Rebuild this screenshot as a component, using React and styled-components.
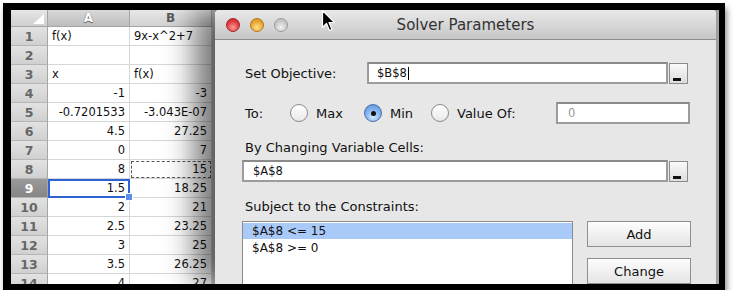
import React from "react";
import styled, { createGlobalStyle } from "styled-components";

const Global = createGlobalStyle`
  html, body {
    margin: 0;
    padding: 0;
    background: #fff;
    font-family: "DejaVu Sans", "Noto Sans", sans-serif;
  }
`;

const Frame = styled.div`
  margin: 3px 0 0 3px;
  width: 722px;
  height: 287px;
  box-sizing: border-box;
  background: #000;
  padding: 7px 6px 6px 8px;
  box-shadow: 2px 5px 6px rgba(0, 0, 0, 0.45);
`;

const Screen = styled.div`
  position: relative;
  width: 100%;
  height: 100%;
  overflow: hidden;
  display: flex;
  background: #a8a8a8;
`;

/* ---------- spreadsheet ---------- */

const Sheet = styled.div`
  width: 204px;
  flex: none;
  display: grid;
  grid-template-columns: 37px 82px 82px 3px;
  grid-auto-rows: 19px;
  grid-template-rows: 17px;
  background: #fff;
  font-size: 11.5px;
  color: #111;
`;

const Corner = styled.div`
  background: linear-gradient(#e6e6e6, #cfcfcf);
  border-right: 1px solid #a5a5a5;
  border-bottom: 1px solid #a5a5a5;
  position: relative;

  &::after {
    content: "";
    position: absolute;
    right: 3px;
    bottom: 2px;
    border-left: 11px solid transparent;
    border-bottom: 10px solid #fff;
  }
`;

const ColHead = styled.div`
  background: ${(p) => (p.$active ? "linear-gradient(#d8d8d8, #bdbdbd)" : "linear-gradient(#e8e8e8, #d2d2d2)")};
  border-right: 1px solid #a5a5a5;
  border-bottom: 1px solid #a5a5a5;
  display: flex;
  align-items: center;
  justify-content: center;
  font-weight: bold;
  font-size: 12px;
  color: ${(p) => (p.$active ? "#fff" : "#5a5a5a")};
  text-shadow: ${(p) => (p.$active ? "0 0 1px #555, 0 1px 1px #666" : "none")};
`;

const RowHead = styled.div`
  background: ${(p) => (p.$active ? "linear-gradient(#9a9a9a, #858585)" : "linear-gradient(#e2e2e2, #d0d0d0)")};
  border-right: 1px solid #a5a5a5;
  border-bottom: 1px solid #b5b5b5;
  display: flex;
  align-items: center;
  justify-content: center;
  font-weight: bold;
  font-size: 12.5px;
  color: ${(p) => (p.$active ? "#fff" : "#666")};
`;

const Cell = styled.div`
  position: relative;
  border-right: 1px solid #d6d6d6;
  border-bottom: 1px solid #d6d6d6;
  display: flex;
  align-items: center;
  justify-content: ${(p) => (p.$left ? "flex-start" : "flex-end")};
  padding: 0 4px;
  white-space: nowrap;
  overflow: visible;
  box-sizing: border-box;
  ${(p) => (p.$selected ? "outline: 2px solid #2d62d2; outline-offset: -2px; z-index: 1;" : "")}
  ${(p) => (p.$copy ? "outline: 1px dashed #555; outline-offset: -2px;" : "")}
`;

const Handle = styled.span`
  position: absolute;
  right: -4px;
  bottom: -4px;
  width: 6px;
  height: 6px;
  background: #5b8ee8;
  border: 1px solid #fff;
`;

const Gutter = styled.div`
  background: #c8c8c8;
`;

/* ---------- dialog ---------- */

const Dialog = styled.div`
  flex: none;
  width: 502px;
  height: 100%;
  display: flex;
  flex-direction: column;
  background: #e7e7e7;
  border-radius: 4px 4px 0 0;
  box-shadow: -20px 0 30px rgba(0, 0, 0, 0.55);
  border-right: 1px solid #9c9c9c;
  box-sizing: border-box;
  position: relative;
  z-index: 2;
`;

const TitleBar = styled.div`
  position: relative;
  height: 29px;
  flex: none;
  display: flex;
  align-items: center;
  justify-content: center;
  background: linear-gradient(#e9e9e9, #c6c6c6);
  border-bottom: 1px solid #8e8e8e;
  border-radius: 4px 4px 0 0;
  font-size: 15px;
  color: #333;
`;

const Lights = styled.div`
  position: absolute;
  left: 11px;
  top: 8px;
  display: flex;
  gap: 10px;
`;

const Light = styled.span`
  width: 14px;
  height: 14px;
  border-radius: 50%;
  box-sizing: border-box;
  border: 1px solid ${(p) => p.$edge};
  background: radial-gradient(circle at 50% 70%, ${(p) => p.$hi} 0%, ${(p) => p.$base} 65%);
`;

const Cursor = styled.svg`
  position: absolute;
  left: 106px;
  top: -1px;
`;

const Body = styled.div`
  padding: 22px 26px 0 27px;
  display: flex;
  flex-direction: column;
  font-size: 13px;
  color: #111;
`;

const Row = styled.div`
  display: flex;
  align-items: center;
  margin-top: ${(p) => p.$mt || 0}px;
`;

const Label = styled.div`
  padding-left: 3px;
  width: ${(p) => p.$w || "auto"};
  box-sizing: border-box;
  flex: none;
`;

const Input = styled.div`
  box-sizing: border-box;
  height: 22px;
  width: ${(p) => p.$w || "auto"};
  flex: ${(p) => (p.$grow ? 1 : "none")};
  background: #fff;
  border: 2px solid #9c9c9c;
  border-top-color: #8a8a8a;
  display: flex;
  align-items: center;
  padding-left: ${(p) => p.$pl || 8}px;
  font-size: 11.5px;
  color: ${(p) => (p.$muted ? "#999" : "#111")};
`;

const Caret = styled.span`
  display: inline-block;
  width: 1px;
  height: 13px;
  background: #000;
  margin-left: 1px;
`;

const RefButton = styled.div`
  flex: none;
  width: 19px;
  height: 21px;
  margin-left: 1px;
  margin-right: 2px;
  box-sizing: border-box;
  border: 1px solid #8c8c8c;
  background: linear-gradient(#fafafa, #dcdcdc);
  position: relative;

  &::after {
    content: "";
    position: absolute;
    left: 3px;
    bottom: 2px;
    width: 8px;
    height: 3px;
    background: #111;
  }
`;

const Option = styled.label`
  display: flex;
  align-items: center;
  gap: 8px;
  width: ${(p) => p.$w || "auto"};
  flex: none;
`;

const Radio = styled.span`
  width: 18px;
  height: 18px;
  border-radius: 50%;
  box-sizing: border-box;
  flex: none;
  border: 1px solid ${(p) => (p.$on ? "#4a6ea8" : "#8a8a8a")};
  background: ${(p) =>
    p.$on
      ? "radial-gradient(circle at 50% 75%, #cfe6ff 0%, #7fb0ee 55%, #5a8fd6 100%)"
      : "linear-gradient(#fff, #e9e9e9)"};
  display: flex;
  align-items: center;
  justify-content: center;

  &::after {
    content: "";
    width: 5px;
    height: 5px;
    border-radius: 50%;
    background: #111;
    display: ${(p) => (p.$on ? "block" : "none")};
  }
`;

const Constraints = styled.div`
  display: flex;
  align-items: flex-start;
  margin-top: 7px;
`;

const List = styled.div`
  width: 331px;
  height: 80px;
  flex: none;
  box-sizing: border-box;
  background: #fff;
  border: 1px solid #8c8c8c;
  padding-top: 1px;
  font-size: 12px;
`;

const ListItem = styled.div`
  height: 16px;
  line-height: 16px;
  padding-left: 9px;
  background: ${(p) => (p.$sel ? "#a9caf9" : "transparent")};
  margin-bottom: 1px;
`;

const Buttons = styled.div`
  margin-left: 14px;
  display: flex;
  flex-direction: column;
  gap: 11px;
`;

const Button = styled.div`
  width: 104px;
  height: 26px;
  box-sizing: border-box;
  border: 1px solid #8e8e8e;
  background: linear-gradient(#fdfdfd, #e4e4e4);
  display: flex;
  align-items: center;
  justify-content: center;
  font-size: 13px;
  color: #111;
`;

const rows = [
  ["f(x)", "9x-x^2+7", true],
  ["", "", true],
  ["x", "f(x)", true],
  ["-1", "-3"],
  ["-0.7201533", "-3.043E-07"],
  ["4.5", "27.25"],
  ["0", "7"],
  ["8", "15"],
  ["1.5", "18.25"],
  ["2", "21"],
  ["2.5", "23.25"],
  ["3", "25"],
  ["3.5", "26.25"],
  ["4", "27"],
];

export default function App() {
  return (
    <>
      <Global />
      <Frame>
        <Screen>
          <Sheet>
            <Corner />
            <ColHead $active>A</ColHead>
            <ColHead>B</ColHead>
            <Gutter />
            {rows.map(([a, b, left], i) => (
              <React.Fragment key={i}>
                <RowHead $active={i === 8}>{i + 1}</RowHead>
                <Cell $left={left} $selected={i === 8}>
                  {a}
                  {i === 8 ? <Handle /> : null}
                </Cell>
                <Cell $left={left} $copy={i === 7}>{b}</Cell>
                <Gutter />
              </React.Fragment>
            ))}
          </Sheet>

          <Dialog>
            <TitleBar>
              <Lights>
                <Light $edge="#a8232a" $base="#d8323a" $hi="#ff9a8e" />
                <Light $edge="#b3761b" $base="#e3a028" $hi="#ffe28a" />
                <Light $edge="#9a9a9a" $base="#c4c4c4" $hi="#f2f2f2" />
              </Lights>
              <Cursor width="16" height="24" viewBox="0 0 16 24">
                <path d="M1.5 1.5 L1.5 18.5 L5.5 14.5 L8.5 21.5 L11 20.5 L8 13.5 L13.5 13.5 Z" fill="#000" stroke="#fff" strokeWidth="1.2" strokeLinejoin="round" />
              </Cursor>
              Solver Parameters
            </TitleBar>

            <Body>
              <Row>
                <Label $w="125px">Set Objective:</Label>
                <Input $grow>
                  $B$8<Caret />
                </Input>
                <RefButton />
              </Row>

              <Row $mt={18}>
                <Label $w="48px">To:</Label>
                <Option $w="74px">
                  <Radio />
                  Max
                </Option>
                <Option $w="67px">
                  <Radio $on />
                  Min
                </Option>
                <Option>
                  <Radio />
                  Value Of:
                </Option>
                <Input $w="134px" $muted $pl={10} style={{ marginLeft: "auto" }}>
                  0
                </Input>
              </Row>

              <Row $mt={16}>
                <Label>By Changing Variable Cells:</Label>
              </Row>
              <Row $mt={5}>
                <Input $grow $pl={9}>$A$8</Input>
                <RefButton />
              </Row>

              <Row $mt={17}>
                <Label>Subject to the Constraints:</Label>
              </Row>
              <Constraints>
                <List>
                  <ListItem $sel>$A$8 &lt;= 15</ListItem>
                  <ListItem>$A$8 &gt;= 0</ListItem>
                </List>
                <Buttons>
                  <Button>Add</Button>
                  <Button>Change</Button>
                </Buttons>
              </Constraints>
            </Body>
          </Dialog>
        </Screen>
      </Frame>
    </>
  );
}
